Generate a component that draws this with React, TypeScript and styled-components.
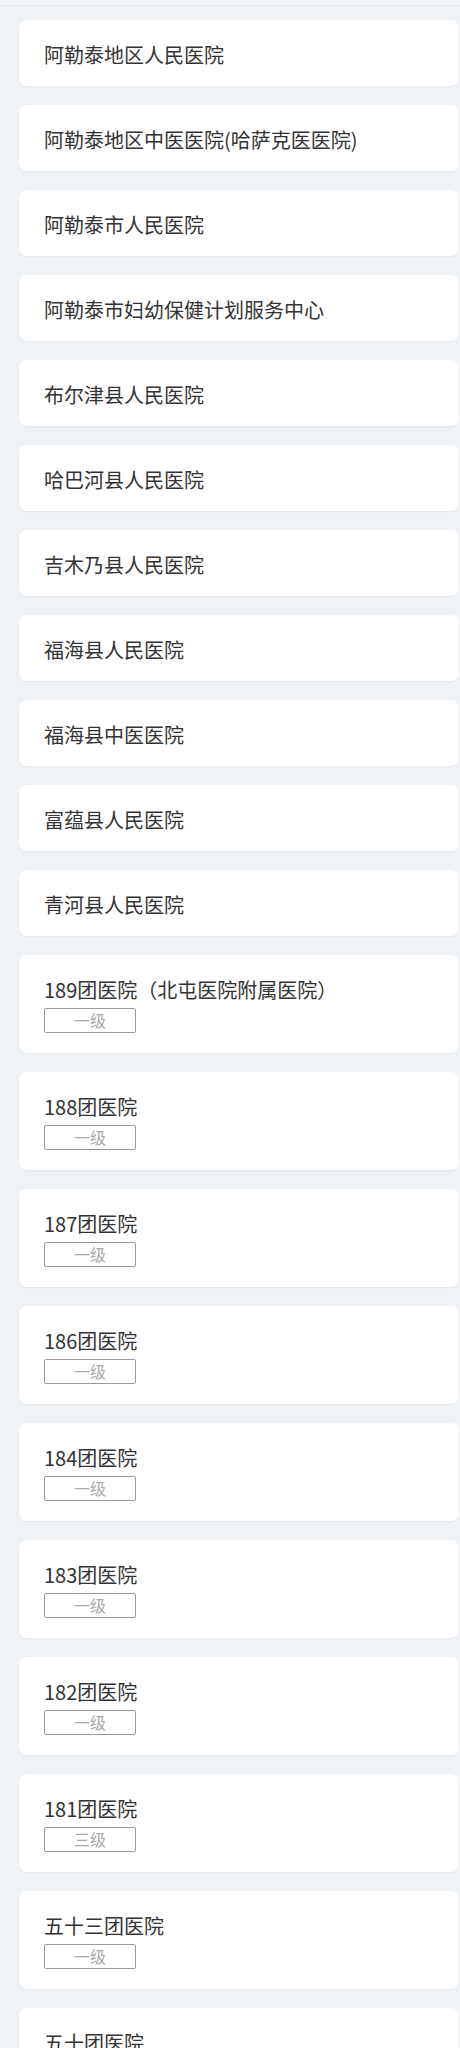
import styled, { createGlobalStyle } from "styled-components";

interface Hospital {
  name: string;
  level?: string;
}

const hospitals: Hospital[] = [
  { name: "阿勒泰地区人民医院" },
  { name: "阿勒泰地区中医医院(哈萨克医医院)" },
  { name: "阿勒泰市人民医院" },
  { name: "阿勒泰市妇幼保健计划服务中心" },
  { name: "布尔津县人民医院" },
  { name: "哈巴河县人民医院" },
  { name: "吉木乃县人民医院" },
  { name: "福海县人民医院" },
  { name: "福海县中医医院" },
  { name: "富蕴县人民医院" },
  { name: "青河县人民医院" },
  { name: "189团医院（北屯医院附属医院）", level: "一级" },
  { name: "188团医院", level: "一级" },
  { name: "187团医院", level: "一级" },
  { name: "186团医院", level: "一级" },
  { name: "184团医院", level: "一级" },
  { name: "183团医院", level: "一级" },
  { name: "182团医院", level: "一级" },
  { name: "181团医院", level: "三级" },
  { name: "五十三团医院", level: "一级" },
  { name: "五十团医院", level: "一级" },
];

const App = () => {
  return (
    <>
      <GlobalStyle />
      <Page>
        <TopBar />
        <List>
          {hospitals.map((h) => (
            <Card key={h.name} $hasLevel={!!h.level}>
              <Name>{h.name}</Name>
              {h.level && <Level>{h.level}</Level>}
            </Card>
          ))}
        </List>
      </Page>
    </>
  );
};

export default App;

const GlobalStyle = createGlobalStyle`
body{
margin:0;
background:#f0f3f6;
font-family:"Noto Sans CJK SC","Noto Sans",sans-serif;
}
`;

const Page = styled.div`
min-height:2048px;
background:#f0f3f6;
`;

const TopBar = styled.div`
height:5px;
background:#f3f5f7;
box-shadow:0 1px 1px rgba(0,0,0,0.03);
`;

const List = styled.div`
display:flex;
flex-direction:column;
gap:19px;
padding:15px 1px 0 19px;
`;

const Card = styled.div<{ $hasLevel: boolean }>`
display:flex;
flex-direction:column;
align-items:flex-start;
background:#fff;
border-radius:8px;
box-shadow:0 1px 2px rgba(0,0,0,0.05);
padding:${(p) => (p.$hasLevel ? "21px 25px 20px" : "21px 25px 17px")};
`;

const Name = styled.div`
font-size:20px;
line-height:28px;
color:#333;
`;

const Level = styled.div`
margin-top:4px;
width:92px;
height:25px;
box-sizing:border-box;
border:1px solid #999;
border-radius:2px;
font-size:16px;
line-height:23px;
text-align:center;
color:#aaa;
`;
